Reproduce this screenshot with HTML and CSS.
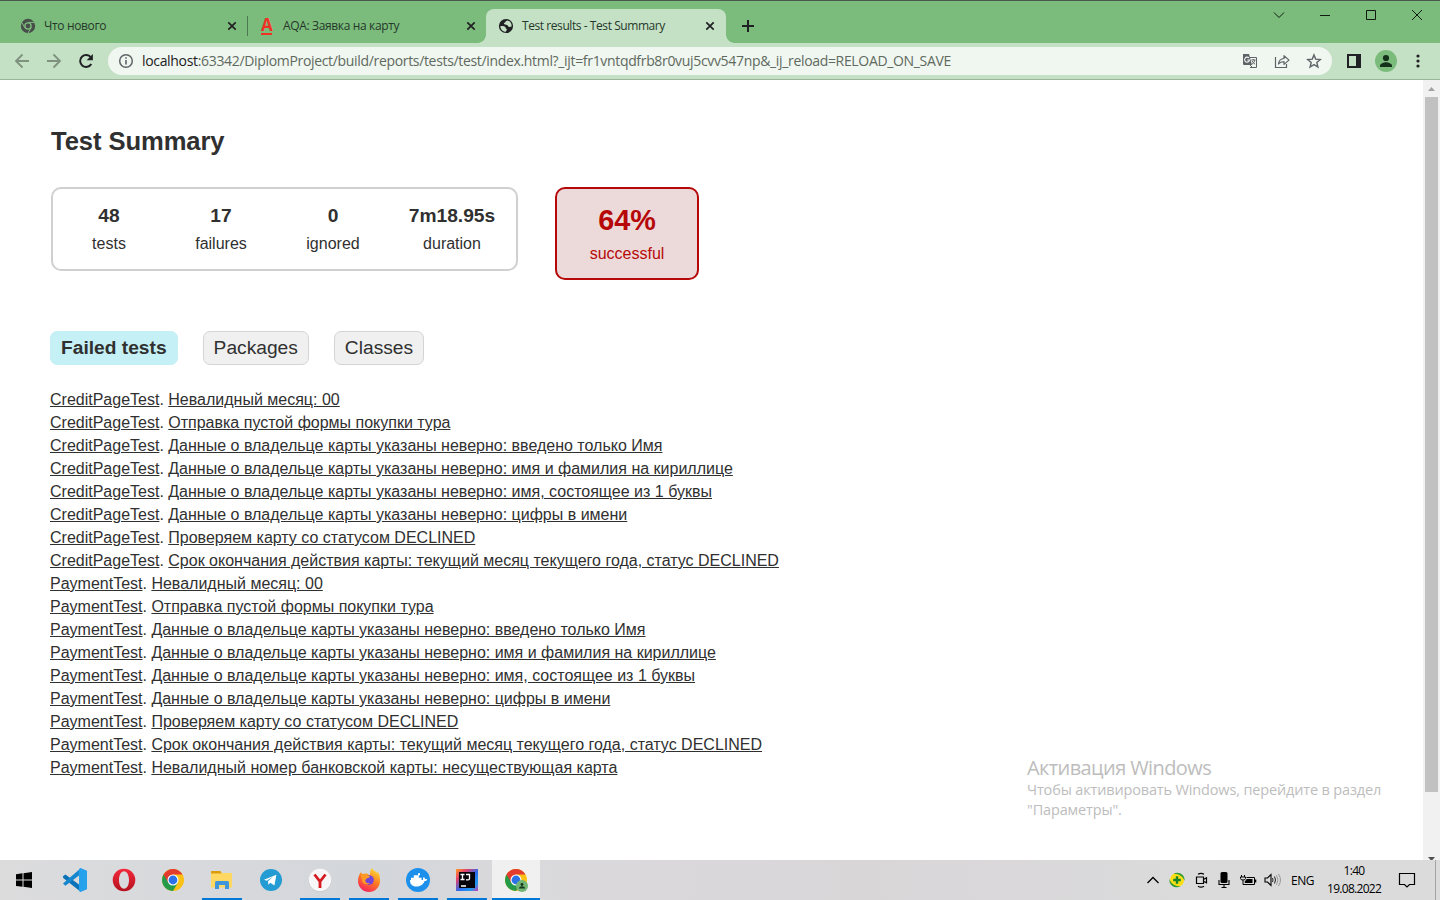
FILE: index.html
```html
<!DOCTYPE html>
<html lang="ru">
<head>
<meta charset="utf-8">
<title>Test results - Test Summary</title>
<link rel="stylesheet" href="styles.css">
</head>
<body>
<header class="tabstrip">
  <div class="tab">
    <svg class="fav" viewBox="0 0 16 16"><circle cx="8" cy="8" r="7.200" fill="#484e4a"/><circle cx="8" cy="8" r="3.800" fill="#7bbc7c"/><circle cx="8" cy="8" r="2.400" fill="#484e4a"/><path d="M8 4.400h6.200M4.900 9.800 1.800 4.500M11.100 9.800 8 15" stroke="#7bbc7c" stroke-width="1"/></svg>
    <span class="title t1">Что нового</span>
    <svg class="close" viewBox="0 0 10 10"><path d="m1.300 1.300 7.400 7.400m0-7.400L1.300 8.700"/></svg>
  </div>
  <div class="tab divided">
    <span class="fav aqa">A</span>
    <span class="title t2">AQA: Заявка на карту</span>
    <svg class="close" viewBox="0 0 10 10"><path d="m1.300 1.300 7.400 7.400m0-7.400L1.300 8.700"/></svg>
  </div>
  <div class="tab active">
    <svg class="fav" viewBox="0 0 16 16"><circle cx="8" cy="8" r="7.100" fill="#202124"/><path d="M2.300 8.200c1.800-.3 3.800-.2 4.700.6.700.6.500 1.700 1.300 2 .8.200.6 1.200-.1 2.100l-.4.900c-3.300-.2-5.300-2.600-5.500-5.600zM9.400 2.400c-1 .5-2.100.7-2 1.700 0 .9-1.600.5-1.500 1.600.2 1.100 2.200.7 3.200 1.200.9.500 1 1.800 2.100 2 .9.100 1.500-.5 2.400-.4.300-2.800-1.400-5.400-4.200-6.100z" fill="#c5e1c5"/></svg>
    <span class="title t3">Test results - Test Summary</span>
    <svg class="close" viewBox="0 0 10 10"><path d="m1.300 1.300 7.400 7.400m0-7.400L1.300 8.700"/></svg>
  </div>
  <svg class="newtab" viewBox="0 0 12 12"><path d="M6 0v12M0 6h12" stroke="#202124" stroke-width="2"/></svg>
  <div class="winctl">
    <svg viewBox="0 0 46 30"><path d="m18 12.500 5 5 5-5"/></svg>
    <svg viewBox="0 0 46 30"><path d="M18 15.500h10"/></svg>
    <svg viewBox="0 0 46 30"><path d="M18.500 10.500h9v9h-9z"/></svg>
    <svg viewBox="0 0 46 30"><path d="m18 10 10 10m0-10L18 20"/></svg>
  </div>
</header>
<div class="toolbar">
  <svg class="nav dim" viewBox="0 0 16 16"><path d="M15 8H2m6.500-6.500L2 8l6.500 6.500"/></svg>
  <svg class="nav dim" viewBox="0 0 16 16"><path d="M1 8h13M7.500 1.500 14 8l-6.500 6.500"/></svg>
  <svg class="nav" viewBox="0 0 16 16"><path d="M13.300 11a6 6 0 1 1-.4-6.700"/><path d="M14.900.9v6.300H8.600z" fill="#202124" stroke="none"/></svg>
  <div class="omnibox">
    <svg class="info" viewBox="0 0 16 16"><circle cx="8" cy="8" r="6.300" fill="none" stroke="#5f6368" stroke-width="1.500"/><path d="M8 7v4.600M8 4.200v1.600" stroke="#5f6368" stroke-width="1.600"/></svg>
    <span class="url"><b>localhost</b>:63342/DiplomProject/build/reports/tests/test/index.html?_ijt=fr1vntqdfrb8r0vuj5cvv547np&amp;_ij_reload=RELOAD_ON_SAVE</span>
    <svg class="act" viewBox="0 0 16 16"><path d="M6 4.500h8.500v10H8" fill="none" stroke="#5f6368"/><path d="M1 1h6l3 11H2a1 1 0 0 1-1-1z" fill="#5f6368"/><path d="M7 5a2.500 2.500 0 1 0 .6 2H5.300" fill="none" stroke="#f0f7f0" stroke-width="1.100"/><path d="M9.300 7h4.200M11.300 6v1m1.500 0c-.3 2-1.500 3.300-2.800 4.200m.3-3.200c.5 1.300 1.500 2.500 2.800 3.200M8 12l2 2" fill="none" stroke="#5f6368"/></svg>
    <svg class="act" viewBox="0 0 16 16"><path d="M1.500 4v10.500h11V11" fill="none" stroke="#5f6368" stroke-width="1.200"/><path d="M4.500 11c.3-3 2-5.300 5.500-5.500V2.700l5 4.400-5 4.300V8.700C7.500 8.700 5.700 9.400 4.500 11z" fill="none" stroke="#5f6368" stroke-width="1.200" stroke-linejoin="round"/></svg>
    <svg class="act" viewBox="0 0 16 16"><path d="m8 1.900 1.700 4.200 4.600.4-3.500 3 1.100 4.500L8 11.600 4.100 14l1.100-4.500-3.500-3 4.600-.4z" fill="none" stroke="#5f6368" stroke-width="1.400"/></svg>
  </div>
  <svg class="side" viewBox="0 0 14 14"><path d="M1 1h12v12H1z" fill="none" stroke="#202124" stroke-width="2"/><path d="M9 1h4v12H9z" fill="#202124"/></svg>
  <svg class="avatar" viewBox="0 0 22 22"><circle cx="11" cy="11" r="11" fill="#7bbc7c"/><circle cx="11" cy="8" r="3.100" fill="#14301a"/><path d="M5 17v-1.500c0-2 4-3.300 6-3.300s6 1.300 6 3.300V17z" fill="#14301a"/></svg>
  <svg class="dots" viewBox="0 0 4 14"><g fill="#202124"><circle cx="2" cy="2" r="1.600"/><circle cx="2" cy="7" r="1.600"/><circle cx="2" cy="12" r="1.600"/></g></svg>
</div>
<div class="viewport">
  <main class="report">
    <h1>Test Summary</h1>
    <section class="summary">
      <div class="group">
        <div class="box"><div class="counter">48</div><p>tests</p></div>
        <div class="box"><div class="counter">17</div><p>failures</p></div>
        <div class="box"><div class="counter">0</div><p>ignored</p></div>
        <div class="box last"><div class="counter">7m18.95s</div><p>duration</p></div>
      </div>
      <div class="rate"><div class="percent">64%</div><p>successful</p></div>
    </section>
    <nav class="links"><a class="on">Failed tests</a><a>Packages</a><a>Classes</a></nav>
    <ul class="failed">
      <li><a>CreditPageTest</a>. <a>Невалидный месяц: 00</a></li>
      <li><a>CreditPageTest</a>. <a>Отправка пустой формы покупки тура</a></li>
      <li><a>CreditPageTest</a>. <a>Данные о владельце карты указаны неверно: введено только Имя</a></li>
      <li><a>CreditPageTest</a>. <a>Данные о владельце карты указаны неверно: имя и фамилия на кириллице</a></li>
      <li><a>CreditPageTest</a>. <a>Данные о владельце карты указаны неверно: имя, состоящее из 1 буквы</a></li>
      <li><a>CreditPageTest</a>. <a>Данные о владельце карты указаны неверно: цифры в имени</a></li>
      <li><a>CreditPageTest</a>. <a>Проверяем карту со статусом DECLINED</a></li>
      <li><a>CreditPageTest</a>. <a>Срок окончания действия карты: текущий месяц текущего года, статус DECLINED</a></li>
      <li><a>PaymentTest</a>. <a>Невалидный месяц: 00</a></li>
      <li><a>PaymentTest</a>. <a>Отправка пустой формы покупки тура</a></li>
      <li><a>PaymentTest</a>. <a>Данные о владельце карты указаны неверно: введено только Имя</a></li>
      <li><a>PaymentTest</a>. <a>Данные о владельце карты указаны неверно: имя и фамилия на кириллице</a></li>
      <li><a>PaymentTest</a>. <a>Данные о владельце карты указаны неверно: имя, состоящее из 1 буквы</a></li>
      <li><a>PaymentTest</a>. <a>Данные о владельце карты указаны неверно: цифры в имени</a></li>
      <li><a>PaymentTest</a>. <a>Проверяем карту со статусом DECLINED</a></li>
      <li><a>PaymentTest</a>. <a>Срок окончания действия карты: текущий месяц текущего года, статус DECLINED</a></li>
      <li><a>PaymentTest</a>. <a>Невалидный номер банковской карты: несуществующая карта</a></li>
    </ul>
  </main>
  <div class="scrollbar">
    <svg viewBox="0 0 17 17"><path d="M5 11h7L8.500 7z" fill="#a3a3a3"/></svg>
    <div class="thumb"></div>
    <svg class="down" viewBox="0 0 17 4"><path d="M5 1h7L8.500 5z" fill="#505050"/></svg>
  </div>
  <aside class="watermark"><div class="wm-title">Активация Windows</div><div class="wm-text">Чтобы активировать Windows, перейдите в раздел<br>"Параметры".</div></aside>
</div>
<footer class="taskbar">
  <div class="app start"><svg viewBox="0 0 24 24"><path d="M4 6.200 10.500 5.300v6.200H4zM11.500 5.200 20 4v7.500h-8.500zM4 12.500h6.500v6.300L4 17.900zM11.500 12.500H20V20l-8.500-1.200z" fill="#000"/></svg></div>
  <div class="app"><svg viewBox="0 0 24 24"><path d="M0 8.300 2.400 6.400 18 18v6L.2 10z" fill="#0a72b8"/><path d="M0 15.500 18 0v6L2.400 17.800z" fill="#1587cf"/><path d="m17.500 0 6.500 2.700v18.600L17.500 24l-1.500-1V1z" fill="#26a2ed"/></svg></div>
  <div class="app"><svg viewBox="0 0 24 24"><defs><linearGradient id="op" x2="0" y2="1"><stop stop-color="#f52a3d"/><stop offset="1" stop-color="#b3101d"/></linearGradient></defs><path fill="url(#op)" fill-rule="evenodd" d="M12 .7a11.300 11.300 0 1 0 0 22.600A11.300 11.300 0 0 0 12 .7zm0 2.500c3 0 5 4 5 8.800s-2 8.800-5 8.800-5-4-5-8.800 2-8.800 5-8.800z"/></svg></div>
  <div class="app"><svg viewBox="0 0 24 24"><g id="chrome"><circle cx="12" cy="12" r="11" fill="#fbc116"/><path d="M12 12 2.500 6.500A11 11 0 0 0 12 23l4.800-8.200z" fill="#249b48"/><path d="M2.500 6.500A11 11 0 0 1 21.500 6.500H12L7.300 14.700z" fill="#e33b2e"/><circle cx="12" cy="12" r="5.500" fill="#fff"/><circle cx="12" cy="12" r="4.400" fill="#2d71e8"/></g></svg></div>
  <div class="app open"><svg viewBox="0 0 24 24"><path d="M1 3.500h10l1 1.500h10v14.500H1z" fill="#ffd763"/><path d="M1 3h9.500l1 2.500H1z" fill="#dc9d0d"/><path d="M5 21v-6.500q0-1.500 1.500-1.500h11q1.500 0 1.500 1.500V21h-4v-4H9v4z" fill="#3e95db"/></svg></div>
  <div class="app"><svg viewBox="0 0 24 24"><circle cx="12" cy="12" r="11" fill="#249bd2"/><path d="m5 11.800 12.400-5-2 10.800-4-2.900-2 2-.4-3.500 5.200-4.700-6.400 4.200z" fill="#fff"/></svg></div>
  <div class="app open"><svg viewBox="0 0 24 24"><circle cx="12" cy="12.500" r="11.300" fill="#bbb"/><circle cx="12" cy="12" r="11.200" fill="#f7f7f7"/><path d="m6.500 6.500 5.500 7 5.500-7M12 13v7" fill="none" stroke="#d71920" stroke-width="2.800"/></svg></div>
  <div class="app open"><svg viewBox="0 0 24 24"><defs><linearGradient id="ff" x1=".8" y1="0" x2=".3" y2="1"><stop stop-color="#ffe238"/><stop offset=".5" stop-color="#ff7a20"/><stop offset="1" stop-color="#f5225d"/></linearGradient></defs><path d="M1 13C1 9 2 7 4 4l1 2 4-.5C11 5 11 7 13 7c0-3 0-5 2-7 1 3 4 3 5 5l1-1c2 3 2 6 2 9a11 11 0 0 1-22 0z" fill="url(#ff)"/><circle cx="12" cy="12" r="4.800" fill="#7446d8"/><path d="M3 5c2 2 4 1 6 1 1 1 3 1 4 3l-4 2c-2 3 1 5 4 4-3 3-8 1-8-3z" fill="#ff9a25"/></svg></div>
  <div class="app open"><svg viewBox="0 0 24 24"><circle cx="12" cy="12" r="12" fill="#1d90ec"/><path d="M4 12h13c0-1 0-2 .7-3 1 .5 1.300 1.300 1.400 2.200.8-.2 1.500 0 2.200.3-.6 1-1.500 1.500-2.700 1.500-1.500 4-4.600 5.500-8.300 5.500-4 0-6.500-2.300-6.300-6.500z" fill="#fff"/><path d="M5 9.700h10.600v2.500H5zM7.800 7.300h5v2.500h-5zM12 5.300h2v2h-2z" fill="#fff"/></svg></div>
  <div class="app open"><svg viewBox="0 0 24 24"><defs><linearGradient id="ij" y2="1"><stop stop-color="#ffa020"/><stop offset=".25" stop-color="#e8406a"/><stop offset=".55" stop-color="#2b6bf0"/><stop offset=".8" stop-color="#1f9af0"/><stop offset="1" stop-color="#d13ab0"/></linearGradient></defs><path d="M1 1h22v22H1z" fill="url(#ij)"/><path d="M4 4h16v16H4z" fill="#08040c"/><path d="M5.500 6.500h4M7.500 6v6M5.500 11.500h4M11 6.500h3.500v4.300q0 1-1.400 1H11M6 18h5" fill="none" stroke="#fff" stroke-width="1.300"/></svg></div>
  <div class="app open current"><svg viewBox="0 0 24 24"><use href="#chrome"/><circle cx="18" cy="18" r="6" fill="#72b574"/><circle cx="18" cy="16.500" r="1.400" fill="#17351b"/><path d="M15 20.500c0-3 6-3 6 0z" fill="#17351b"/></svg></div>
  <div class="tray">
    <svg class="chev" viewBox="0 0 14 14"><path d="m1.500 10 5.500-5.500 5.500 5.500" fill="none" stroke="#000" stroke-width="1.300"/></svg>
    <svg class="shield" viewBox="0 0 16 16"><circle cx="8" cy="8" r="7" fill="#fbdf16"/><path d="M4.500 1.700C10-1.300 16.500 3 15.500 9 14.500 5 10.500 1.700 4.500 1.700zM11.500 14.300C6 17.300-.5 13 .5 7c1 4 5 7.300 11 7.300z" fill="#339a35"/><path d="M8 4.200v7.600M4.200 8h7.600" stroke="#168526" stroke-width="2.400"/></svg>
    <svg class="meet" viewBox="0 0 14 16"><path d="M1.500 5h7v6.500h-7zM8.500 7.500l3-1.700v5l-3-1.600M3 2.300q3-2 6 0M3 14.200q3 2 6 0" fill="none" stroke="#000" stroke-width="1.200"/></svg>
    <svg class="mic" viewBox="0 0 12 16"><rect x="2.500" y="0" width="7" height="11" rx="1.500"/><path d="M1 8v4.500h10V8M6 12.500V16M3.500 15.500h5" fill="none" stroke="#000" stroke-width="1.100"/></svg>
    <svg class="battery" viewBox="0 0 17 14"><path d="M1.500 2v2M4.500 2v2M.5 4h5v1.500q0 1.500-2.500 1.500Q.5 7 .5 5.500zM3 7v4.500h11.500v-7H6.500" fill="none" stroke="#000"/><path d="M6.500 6h6v4H4.800V8q1.700-.5 1.700-2zM15 6.500h1.300v3H15z"/></svg>
    <svg class="volume" viewBox="0 0 17 14"><path d="M1 5h2.500L7 1.500v11L3.500 9H1z" fill="none" stroke="#000" stroke-width="1.100"/><path d="M8.500 5q1 2 0 4M10.500 3.500q2 3.500 0 7" fill="none" stroke="#222"/><path d="M12.500 2.200q3 4.800 0 9.600M14.500 1q4 6 0 12" fill="none" stroke="#9a9a9b"/></svg>
    <span class="lang">ENG</span>
    <div class="clock"><div>1:40</div><div class="date">19.08.2022</div></div>
    <svg class="note" viewBox="0 0 18 18"><path d="M1.500 2.500h15v11h-5L9 16l-2.500-2.500h-5z" fill="none" stroke="#000" stroke-width="1.200"/></svg>
    <div class="peek"></div>
  </div>
</footer>
</body>
</html>
```
FILE: styles.css
```css
* { box-sizing: border-box; }
body { margin: 0; width: 1440px; height: 900px; overflow: hidden; display: flex; flex-direction: column; background: #fff; font-family: "Open Sans", "Noto Sans", sans-serif; }
svg { display: block; flex: none; }

/* Tabs */
.tabstrip { height: 43px; flex: none; display: flex; align-items: flex-end; padding-left: 8px; background: #7bbc7c; border-top: 1px solid #4a594a; }
.tab { width: 239px; height: 34px; display: flex; align-items: center; padding: 0 10px 0 12px; position: relative; }
.fav { width: 16px; height: 16px; margin-right: 8px; flex: none; }
.aqa { color: #f03226; font: bold 17px/15px "Open Sans", sans-serif; text-align: center; border-bottom: 2px solid #f03226; width: 11px; height: 18px; margin: 0 11px 0 2px; }
.title { flex: 1; font-size: 12px; line-height: 16px; white-space: nowrap; color: #26382a; }
.t1, .t2 { letter-spacing: -.350px; }
.t3 { letter-spacing: -.430px; }
.close { width: 10px; height: 10px; fill: none; stroke: #202124; stroke-width: 1.700; }
.divided::before { content: ""; position: absolute; left: 0; top: 7px; width: 1px; height: 20px; background: #4c7a4e; }
.active { width: 240px; padding-right: 11px; background: #c5e1c5; border-radius: 8px 8px 0 0; }
.active::before, .active::after { content: ""; position: absolute; bottom: 0; width: 8px; height: 8px; }
.active::before { left: -8px; background: radial-gradient(circle at 0 0, transparent 7.500px, #c5e1c5 8px); }
.active::after { right: -8px; background: radial-gradient(circle at 100% 0, transparent 7.500px, #c5e1c5 8px); }
.newtab { width: 12px; height: 12px; margin: 0 0 11px 16px; }
.winctl { display: flex; margin-left: auto; align-self: flex-start; }
.winctl svg { width: 46px; height: 30px; fill: none; stroke: #101a10; stroke-width: 1; margin-top: -1px; }

/* Toolbar */
.toolbar { height: 37px; flex: none; display: flex; align-items: center; padding: 0 19px 1px 14px; background: #c5e1c5; border-bottom: 1px solid #9cb49c; }
.nav { width: 16px; height: 16px; margin-right: 16px; fill: none; stroke: #202124; stroke-width: 2; }
.dim { stroke: #7f917f; stroke-width: 1.800; }
.omnibox { width: 1224px; height: 28px; margin-left: -2px; border-radius: 14px; background: #f0f7f0; display: flex; align-items: center; padding: 0 10px; }
.info { width: 16px; height: 16px; margin-right: 8px; }
.url { flex: 1; font-size: 14px; line-height: 20px; color: #5f6960; white-space: nowrap; letter-spacing: -.330px; }
.url b { font-weight: 400; color: #202124; }
.act { width: 16px; height: 16px; margin-left: 16px; }
.side { width: 14px; height: 14px; margin-left: 15px; }
.avatar { width: 22px; height: 22px; margin-left: 14px; }
.dots { width: 4px; height: 14px; margin-left: 19px; }

/* Report */
.viewport { height: 780px; flex: none; display: flex; position: relative; }
.report { flex: 1; padding: 44px 50px 0; color: #303030; font: 16px/23px "Liberation Sans", Arial, sans-serif; }
h1 { margin: 0 0 28px 1px; font-size: 25.600px; line-height: 35px; letter-spacing: -.080px; }
p { margin: 0; }
.summary { display: flex; align-items: flex-start; gap: 37px; margin: 0 0 51px 1px; }
.group { display: flex; gap: 2px; width: 467px; height: 84px; padding: 15px 1px 0; border: 2px solid #d0d0d0; border-radius: 10px; }
.box { width: 110px; text-align: center; }
.last { width: 124px; }
.counter { font-size: 19.200px; line-height: 23px; font-weight: bold; margin-bottom: 5px; }
.rate { width: 144px; height: 93px; padding-top: 15px; text-align: center; color: #b60808; background: #ecdada; border: 2px solid #b60808; border-radius: 10px; }
.percent { font-size: 28.800px; line-height: 33px; font-weight: bold; margin-bottom: 5px; }
.links { display: flex; gap: 25px; font-size: 19.200px; line-height: 32px; margin-bottom: 23px; }
.links a { padding: 0 10px; background: #f0f0f0; border: 1px solid #d4d4d4; border-radius: 7px; }
.links .on { font-weight: bold; background: #c5f0f5; border-color: #c5f0f5; }
.failed { list-style: none; margin: 0; padding: 0; white-space: nowrap; }
.failed a { text-decoration: underline; }
.scrollbar { width: 17px; background: #f1f1f1; display: flex; flex-direction: column; }
.scrollbar svg { width: 17px; height: 17px; }
.thumb { width: 13px; height: 695px; margin: 0 auto; background: #c1c1c1; }
.scrollbar .down { height: 4px; margin-top: auto; }
.watermark { position: absolute; left: 1027px; top: 675px; color: #bdbdbd; white-space: nowrap; }
.wm-title { font-size: 20px; line-height: 25px; letter-spacing: -.600px; }
.wm-text { font-size: 14.500px; line-height: 20px; letter-spacing: -.150px; }

/* Taskbar */
.taskbar { height: 40px; flex: none; display: flex; background: linear-gradient(90deg, #dcdcdd, #d3d6db 26%, #dad9dc 36%, #d9d6d8 60%, #dbdbdc 85%); }
.app { width: 40px; height: 40px; margin-right: 9px; padding: 8px; }
.app svg { width: 24px; height: 24px; }
.start { width: 48px; margin-right: 7px; padding: 8px 12px; }
.open { border-bottom: 2px solid #0078d7; }
.current { width: 48px; margin-left: -4px; padding: 8px 12px; background: #f0f0f0; }
.tray { margin-left: auto; display: flex; align-items: center; color: #000; }
.chev { width: 14px; height: 14px; margin-right: 9px; }
.shield { width: 16px; height: 16px; margin-right: 10px; }
.meet { width: 14px; height: 16px; margin-right: 9px; }
.mic { width: 12px; height: 16px; margin-right: 10px; }
.battery { width: 17px; height: 14px; margin-right: 7px; }
.volume { width: 17px; height: 14px; margin-right: 10px; }
.lang { width: 24px; margin-right: 12px; font-size: 12px; letter-spacing: -.450px; }
.clock { width: 54px; margin-right: 17px; font-size: 12px; line-height: 18px; text-align: center; white-space: nowrap; letter-spacing: -.700px; }
.note { width: 18px; height: 18px; margin-right: 19px; }
.peek { width: 5px; height: 40px; border-left: 1px solid #a5a5a6; }
```
